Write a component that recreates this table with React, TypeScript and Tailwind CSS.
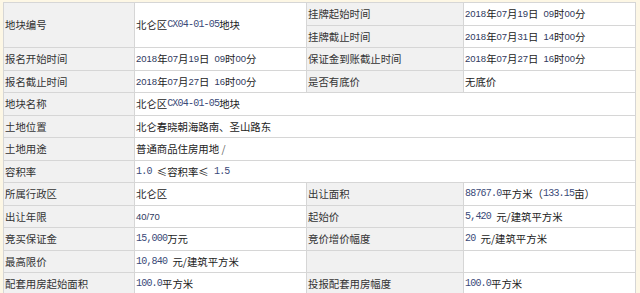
import React from "react";

const M = ({ children }: { children: React.ReactNode }) => (
  <span className="font-['Liberation_Mono',monospace] text-[10px] tracking-[-0.8px] text-[#3a4a78]">{children}</span>
);
const N = ({ children }: { children: React.ReactNode }) => (
  <span className="font-['Liberation_Sans',sans-serif] text-[9.5px] text-[#2f3a60]">{children}</span>
);

const DateT = ({ y, m, d, h, mi }: { y: string; m: string; d: string; h: string; mi: string }) => (
  <>
    <N>{y}</N>年<N>{m}</N>月<N>{d}</N>日<span className="inline-block w-[5px]" />
    <N>{h}</N>时<N>{mi}</N>分
  </>
);

const L = ({ children, className = "" }: { children?: React.ReactNode; className?: string }) => (
  <div className={`flex items-center bg-[#f1f1f1] pl-[1px] text-[#333] ${className}`}>{children}</div>
);
const V = ({ children, className = "" }: { children?: React.ReactNode; className?: string }) => (
  <div className={`flex items-center bg-white pl-[1px] text-[#222] whitespace-pre ${className}`}>{children}</div>
);

export default function App() {
  return (
    <div className="h-[293px] w-[640px] overflow-hidden bg-[#fdf7e5] pl-[3px] pt-[2px] font-['Noto_Sans_CJK_SC',sans-serif] text-[10.4px] leading-[14px]">
      <div className="grid w-[633px] grid-cols-[130px_171px_156px_171px] grid-rows-[22px_21px_22px_21px_22px_21px_22px_21px_22px_21px_22px_21px_22px] gap-px bg-[#d6d6d6] p-px">
        <L className="row-span-2">地块编号</L>
        <V className="row-span-2">北仑区<M>CX04-01-05</M>地块</V>
        <L>挂牌起始时间</L>
        <V><DateT y="2018" m="07" d="19" h="09" mi="00" /></V>
        <L>挂牌截止时间</L>
        <V><DateT y="2018" m="07" d="31" h="14" mi="00" /></V>

        <L>报名开始时间</L>
        <V><DateT y="2018" m="07" d="19" h="09" mi="00" /></V>
        <L>保证金到账截止时间</L>
        <V><DateT y="2018" m="07" d="27" h="16" mi="00" /></V>

        <L>报名截止时间</L>
        <V><DateT y="2018" m="07" d="27" h="16" mi="00" /></V>
        <L>是否有底价</L>
        <V>无底价</V>

        <L>地块名称</L>
        <V className="col-span-3">北仑区<M>CX04-01-05</M>地块</V>
        <L>土地位置</L>
        <V className="col-span-3">北仑春晓朝海路南、圣山路东</V>
        <L>土地用途</L>
        <V className="col-span-3">普通商品住房用地 <span className="text-[#666]">/</span></V>
        <L>容积率</L>
        <V className="col-span-3"><M>1.0 </M>≤容积率≤<M> 1.5</M></V>

        <L>所属行政区</L>
        <V>北仑区</V>
        <L>出让面积</L>
        <V><M>88767.0</M>平方米（<M>133.15</M>亩）</V>

        <L>出让年限</L>
        <V><N>40/70</N></V>
        <L>起始价</L>
        <V><M>5,420 </M>元/建筑平方米</V>

        <L>竞买保证金</L>
        <V><M>15,000</M>万元</V>
        <L>竞价增价幅度</L>
        <V><M>20 </M>元/建筑平方米</V>

        <L>最高限价</L>
        <V><M>10,840 </M>元/建筑平方米</V>
        <L />
        <V />

        <L>配套用房起始面积</L>
        <V><M>100.0</M>平方米</V>
        <L>投报配套用房幅度</L>
        <V><M>100.0</M>平方米</V>
      </div>
    </div>
  );
}
